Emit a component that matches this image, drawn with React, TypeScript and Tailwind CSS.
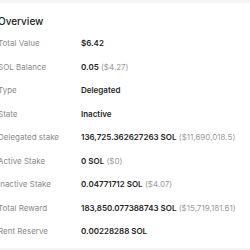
const rows: { label: string; value: string; sub?: string }[] = [
  { label: 'Total Value', value: '$6.42' },
  { label: 'SOL Balance', value: '0.05', sub: '($4.27)' },
  { label: 'Type', value: 'Delegated' },
  { label: 'State', value: 'Inactive' },
  { label: 'Delegated stake', value: '136,725.362627263 SOL', sub: '($11,690,018.5)' },
  { label: 'Active Stake', value: '0 SOL', sub: '($0)' },
  { label: 'Inactive Stake', value: '0.04771712 SOL', sub: '($4.07)' },
  { label: 'Total Reward', value: '183,850.077388743 SOL', sub: '($15,719,181.61)' },
  { label: 'Rent Reserve', value: '0.00228288 SOL' },
];

export default function App() {
  return (
    <div className="w-[250px] h-[250px] overflow-hidden bg-[#f4f4f5] pt-[3px] font-['Inter',sans-serif]">
      <div className="bg-white h-[245px] -ml-[2px] pt-[11px]">
        <h2 className="text-[10px] font-medium text-[#222] leading-[14px]">Overview</h2>
        <div className="mt-[10px] flex flex-col">
          {rows.map((r) => (
            <div key={r.label} className="grid grid-cols-[83px_1fr] h-[23.5px] items-start text-[8px] leading-[11px] whitespace-nowrap">
              <span className="text-[#8a8a8a]">{r.label}</span>
              <span>
                <span className="font-semibold text-[#1f1f1f]">{r.value}</span>
                {r.sub && <span className="text-[#9a9a9a]"> {r.sub}</span>}
              </span>
            </div>
          ))}
        </div>
      </div>
    </div>
  );
}
